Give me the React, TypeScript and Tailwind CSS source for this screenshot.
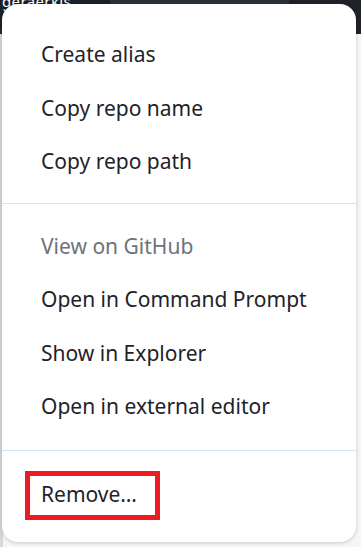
import React from "react";

const font = { fontFamily: '"Noto Sans", "Open Sans", sans-serif' };

function Item({ label, disabled }: { label: string; disabled?: boolean }) {
  return (
    <div
      className={`h-[53.5px] flex items-center pl-[39px] text-[21px] ${
        disabled ? "text-[#6e7379]" : "text-[#1f2328]"
      }`}
    >
      {label}
    </div>
  );
}

export default function App() {
  return (
    <div className="relative w-[361px] h-[547px] overflow-hidden bg-[#e4e4e4]" style={font}>
      <div className="h-[34px] bg-[#24292f] flex items-start overflow-hidden">
        <div className="w-[110px] h-[34px] bg-[#1c2128] text-white text-[15px] leading-none -mt-[6px] pl-[2px] tracking-wide">
          geraerkis
        </div>
        <div className="flex-1 h-[34px] bg-[#2b3036]" />
        <div className="w-[72px] h-[34px] bg-[#1f2328]" />
      </div>
      <div className="flex h-[513px]">
        <div className="w-[3px] bg-[#d8d8d8]" />
        <div className="flex-1 bg-[#f6f6f6]" />
      </div>
      <div className="absolute left-[2px] top-[4px] w-[354px] h-[538px] bg-white rounded-[16px] shadow-[0_1px_4px_rgba(0,0,0,0.18)] flex flex-col">
        <div className="pt-[24px] pb-[14px]">
          <Item label="Create alias" />
          <Item label="Copy repo name" />
          <Item label="Copy repo path" />
        </div>
        <div className="h-px bg-[#d7e4f5]" />
        <div className="pt-[16px] pb-[16px]">
          <Item label="View on GitHub" disabled />
          <Item label="Open in Command Prompt" />
          <Item label="Show in Explorer" />
          <Item label="Open in external editor" />
        </div>
        <div className="h-px bg-[#d7e4f5]" />
        <div className="pt-[20px] pl-[23px]">
          <div className="inline-flex items-center h-[49px] border-[5px] border-[#ed1c24] pl-[11px] pr-[18px] text-[21px] text-[#1f2328]">
            Remove…
          </div>
        </div>
      </div>
    </div>
  );
}
